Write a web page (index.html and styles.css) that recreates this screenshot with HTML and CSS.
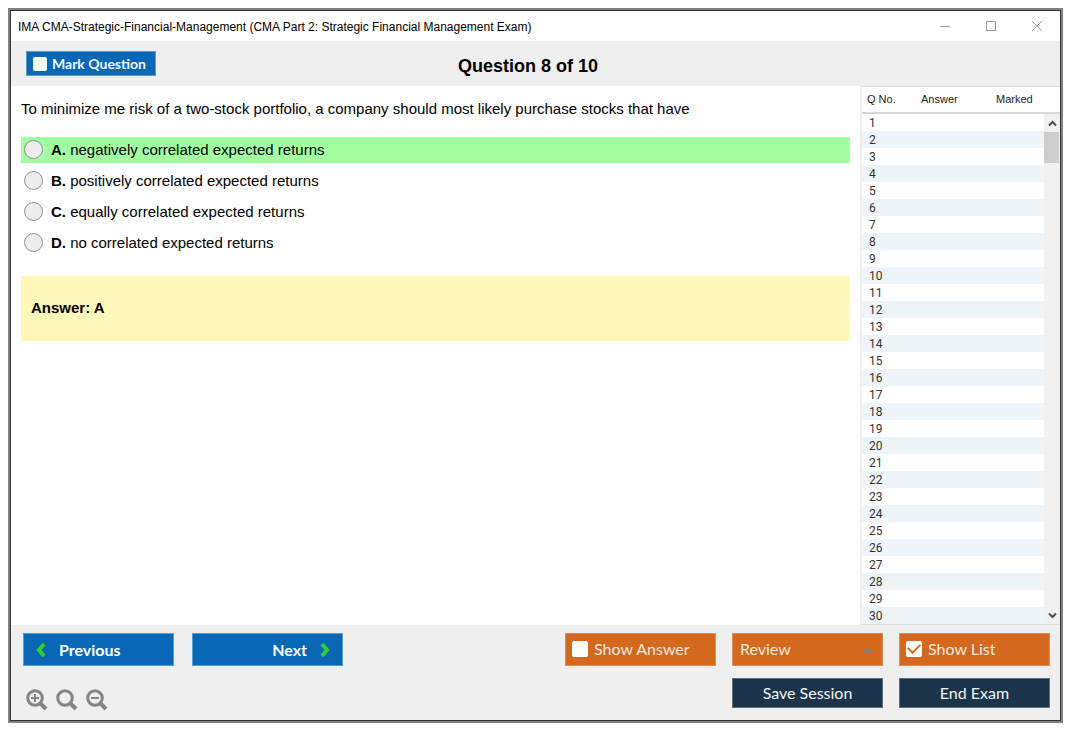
FILE: index.html
```html
<!DOCTYPE html>
<html lang="en">
<head>
<meta charset="utf-8">
<title>CMA Part 2: Strategic Financial Management Exam</title>
<link rel="stylesheet" href="styles.css">
</head>
<body>
<div class="window">
  <header class="titlebar">
    <span class="titlebar-text">IMA CMA-Strategic-Financial-Management (CMA Part 2: Strategic Financial Management Exam)</span>
    <div class="window-controls">
      <button class="window-button" type="button" aria-label="Minimize"><svg width="12" height="12" viewBox="0 0 12 12"><path d="M1 5.500H11"/></svg></button>
      <button class="window-button" type="button" aria-label="Maximize"><svg width="12" height="12" viewBox="0 0 12 12"><path d="M1.500 0.500H10.500V9.500H1.500Z"/></svg></button>
      <button class="window-button" type="button" aria-label="Close"><svg width="12" height="12" viewBox="0 0 12 12"><path d="M1 0L11 10M11 0L1 10"/></svg></button>
    </div>
  </header>

  <div class="toolbar">
    <label class="mark"><input class="check check-small" type="checkbox">Mark Question</label>
    <h1 class="heading">Question 8 of 10</h1>
  </div>

  <div class="content">
    <main class="question">
      <p class="question-text">To minimize me risk of a two-stock portfolio, a company should most likely purchase stocks that have</p>
      <div class="options">
        <label class="option option-correct"><input class="radio" type="radio" name="choice"><span><b>A.</b> negatively correlated expected returns</span></label>
        <label class="option"><input class="radio" type="radio" name="choice"><span><b>B.</b> positively correlated expected returns</span></label>
        <label class="option"><input class="radio" type="radio" name="choice"><span><b>C.</b> equally correlated expected returns</span></label>
        <label class="option"><input class="radio" type="radio" name="choice"><span><b>D.</b> no correlated expected returns</span></label>
      </div>
      <p class="answer">Answer: A</p>
    </main>

    <aside class="sidebar">
      <table class="list">
        <thead><tr><th class="col-number">Q No.</th><th class="col-answer">Answer</th><th class="col-marked">Marked</th></tr></thead>
        <tbody>
          <tr><td>1</td><td></td><td></td></tr>
          <tr><td>2</td><td></td><td></td></tr>
          <tr><td>3</td><td></td><td></td></tr>
          <tr><td>4</td><td></td><td></td></tr>
          <tr><td>5</td><td></td><td></td></tr>
          <tr><td>6</td><td></td><td></td></tr>
          <tr><td>7</td><td></td><td></td></tr>
          <tr><td>8</td><td></td><td></td></tr>
          <tr><td>9</td><td></td><td></td></tr>
          <tr><td>10</td><td></td><td></td></tr>
          <tr><td>11</td><td></td><td></td></tr>
          <tr><td>12</td><td></td><td></td></tr>
          <tr><td>13</td><td></td><td></td></tr>
          <tr><td>14</td><td></td><td></td></tr>
          <tr><td>15</td><td></td><td></td></tr>
          <tr><td>16</td><td></td><td></td></tr>
          <tr><td>17</td><td></td><td></td></tr>
          <tr><td>18</td><td></td><td></td></tr>
          <tr><td>19</td><td></td><td></td></tr>
          <tr><td>20</td><td></td><td></td></tr>
          <tr><td>21</td><td></td><td></td></tr>
          <tr><td>22</td><td></td><td></td></tr>
          <tr><td>23</td><td></td><td></td></tr>
          <tr><td>24</td><td></td><td></td></tr>
          <tr><td>25</td><td></td><td></td></tr>
          <tr><td>26</td><td></td><td></td></tr>
          <tr><td>27</td><td></td><td></td></tr>
          <tr><td>28</td><td></td><td></td></tr>
          <tr><td>29</td><td></td><td></td></tr>
          <tr><td>30</td><td></td><td></td></tr>
        </tbody>
      </table>
      <div class="scroll">
        <button class="scroll-button" type="button" aria-label="Scroll up"><svg width="9" height="7" viewBox="0 0 9 7"><path d="M1 5.500L4.500 2L8 5.500"/></svg></button>
        <div class="scroll-track"><div class="scroll-thumb"></div></div>
        <button class="scroll-button" type="button" aria-label="Scroll down"><svg width="9" height="7" viewBox="0 0 9 7"><path d="M1 1.500L4.500 5L8 1.500"/></svg></button>
      </div>
    </aside>
  </div>

  <footer class="footer">
    <div class="footer-left">
      <div class="row">
        <button class="button nav-button" type="button"><svg width="10" height="16" viewBox="0 0 10 16"><path d="M8 2L3 8L8 14"/></svg>Previous</button>
        <button class="button nav-button nav-next" type="button">Next<svg width="10" height="16" viewBox="0 0 10 16"><path d="M2 2L7 8L2 14"/></svg></button>
      </div>
      <div class="zoom">
        <button class="zoom-button" type="button" aria-label="Zoom in"><svg width="22" height="22" viewBox="0 0 22 22"><circle cx="9" cy="9" r="7.300"/><path class="handle" d="M14.500 14.500L20 20"/><path class="sign" d="M5 9H13M9 5V13"/></svg></button>
        <button class="zoom-button" type="button" aria-label="Reset zoom"><svg width="22" height="22" viewBox="0 0 22 22"><circle cx="9" cy="9" r="7.300"/><path class="handle" d="M14.500 14.500L20 20"/></svg></button>
        <button class="zoom-button" type="button" aria-label="Zoom out"><svg width="22" height="22" viewBox="0 0 22 22"><circle cx="9" cy="9" r="7.300"/><path class="handle" d="M14.500 14.500L20 20"/><path class="sign" d="M5 9H13"/></svg></button>
      </div>
    </div>
    <div class="footer-right">
      <div class="row">
        <label class="button toggle"><input class="check" type="checkbox">Show Answer</label>
        <div class="review">
          <select class="button review-select" aria-label="Review"><option>Review</option></select>
          <svg class="review-arrow" width="10" height="6" viewBox="0 0 10 6"><path d="M0 6L5 0L10 6Z"/></svg>
        </div>
        <label class="button toggle"><input class="check" type="checkbox" checked>Show List</label>
      </div>
      <div class="row">
        <button class="button session" type="button">Save Session</button>
        <button class="button session" type="button">End Exam</button>
      </div>
    </div>
  </footer>
</div>
</body>
</html>
```
FILE: styles.css
```css
* { box-sizing: border-box; }

body {
  margin: 0;
  padding: 8px 12px 12px 8px;
  background: #fff;
  color: #000;
  font-family: "Liberation Sans", Arial, sans-serif;
}

button, select, input { margin: 0; font: inherit; }
button { border: 0; padding: 0; background: none; }
svg { display: block; fill: none; }

.window {
  display: flex;
  flex-direction: column;
  min-height: calc(100vh - 20px);
  border: 2px solid #808080;
  outline: 1px solid #333;
  outline-offset: -3px;
  padding: 1px;
  background: #fff;
}

.titlebar {
  display: flex;
  align-items: center;
  justify-content: space-between;
  height: 30px;
  padding: 2px 0 0 7px;
  font-size: 12px;
}
.window-controls { display: flex; }
.window-button { display: grid; place-items: center; width: 46px; height: 28px; }
.window-button svg { stroke: #999; }

.toolbar {
  display: grid;
  grid-template-columns: 1fr auto 1fr;
  align-items: center;
  height: 45px;
  padding: 0 30px 0 15px;
  background: #efefef;
}
.mark {
  display: flex;
  align-items: center;
  justify-self: start;
  gap: 5px;
  height: 25px;
  padding: 0 9px 0 6px;
  border: 1px solid #5a9bd0;
  background: #0868b6;
  color: #f2f8ff;
  font: bold 14px Lato, sans-serif;
}
.heading { margin: 4px 0 0; font-size: 18px; line-height: 24px; }

.check {
  appearance: none;
  flex: none;
  display: grid;
  place-items: center;
  width: 16px;
  height: 16px;
  border-radius: 2px;
  background: #fff;
}
.check-small { width: 14px; height: 14px; }
.check:checked::before {
  content: "";
  width: 10px;
  height: 6px;
  margin-bottom: 3px;
  border: solid #d2691e;
  border-width: 0 0 2px 2px;
  transform: rotate(-45deg);
}

.content { display: flex; flex: 1; }
.question { flex: 1; padding: 14px 10px; font-size: 15px; }
.question-text { margin: 0 0 19px; line-height: 18px; }
.options { display: flex; flex-direction: column; gap: 5px; }
.option { display: flex; align-items: center; gap: 8px; height: 26px; padding: 0 0 2px 3px; }
.option-correct { background: #a2ffa2; }
.radio {
  appearance: none;
  width: 19px;
  height: 19px;
  border: 1px solid #919191;
  border-radius: 50%;
  background: #ededed;
}
.answer {
  margin: 20px 0 0;
  padding: 23px 10px 24px;
  background: #fff8b8;
  font-weight: bold;
  line-height: 18px;
}

.sidebar {
  display: grid;
  grid-template-columns: 1fr 16px;
  width: 200px;
  border-left: 2px solid #eee;
  border-bottom: 1px solid #ddd;
}
.list {
  grid-area: 1 / 1;
  align-self: start;
  width: 182px;
  border-collapse: separate;
  border-spacing: 0;
  table-layout: fixed;
  color: #333;
  font-size: 12px;
}
.list th {
  height: 28px;
  padding: 0 0 2px;
  border-top: 1px solid #d8d8d8;
  border-bottom: 2px solid #d8d8d8;
  color: #222;
  font-size: 11px;
  font-weight: normal;
  text-align: left;
}
.list th:first-child { padding-left: 5px; }
.list td { height: 17px; padding: 2px 0 0; line-height: 15px; font-family: Roboto, sans-serif; }
.list td:first-child { padding-left: 7px; }
.list tbody tr:nth-child(even) { background: #eff4f9; }
.col-number { width: 59px; }
.col-answer { width: 75px; }

.scroll {
  grid-area: 1 / 2;
  display: flex;
  flex-direction: column;
  border-top: 1px solid #d8d8d8;
  padding-top: 25px;
}
.scroll-button {
  display: grid;
  place-items: center;
  width: 16px;
  height: 17px;
  background: #f0f0f0;
}
.scroll-button:first-child { height: 20px; border-top: 2px solid #d8d8d8; }
.scroll-button svg { stroke: #505050; stroke-width: 2; }
.scroll-track { flex: 1; background: #f0f0f0; }
.scroll-thumb { width: 15px; height: 31px; background: #cdcdcd; }

.footer {
  display: flex;
  justify-content: space-between;
  padding: 8px 10px 9px 12px;
  background: #efefef;
}
.row { display: flex; justify-content: flex-end; gap: 16px; }
.footer-left { display: flex; flex-direction: column; gap: 23px; }
.footer-left .row { gap: 18px; }
.footer-right { display: flex; flex-direction: column; gap: 12px; }
.button {
  display: flex;
  align-items: center;
  width: 151px;
  height: 33px;
  border: 1px solid;
  border-radius: 0;
  font: 16px Lato, sans-serif;
}
.nav-button {
  gap: 13px;
  padding: 0 12px;
  border-color: #5a9bd0;
  background: #0868b6;
  color: #fff;
  font-weight: bold;
}
.nav-next { justify-content: flex-end; }
.nav-button svg { stroke: #32cd32; stroke-width: 4; }
.toggle { gap: 6px; padding: 0 6px 2px; }
.toggle, .review-select { border-color: #e08d55; background: #d2691e; color: #f8e8dc; }
.review { position: relative; }
.review-select { appearance: none; padding: 0 7px 2px; }
.review-arrow { position: absolute; right: 10px; top: 14px; fill: #85807c; pointer-events: none; }
.session { justify-content: center; height: 30px; padding-bottom: 2px; border-color: #5d7080; background: #1b344a; color: #f0f4f8; }

.zoom { display: flex; gap: 8px; padding-left: 3px; }
.zoom-button svg { stroke: #858585; stroke-width: 3; }
.zoom-button .handle { stroke-width: 4; }
.zoom-button .sign { stroke-width: 2; }
```
